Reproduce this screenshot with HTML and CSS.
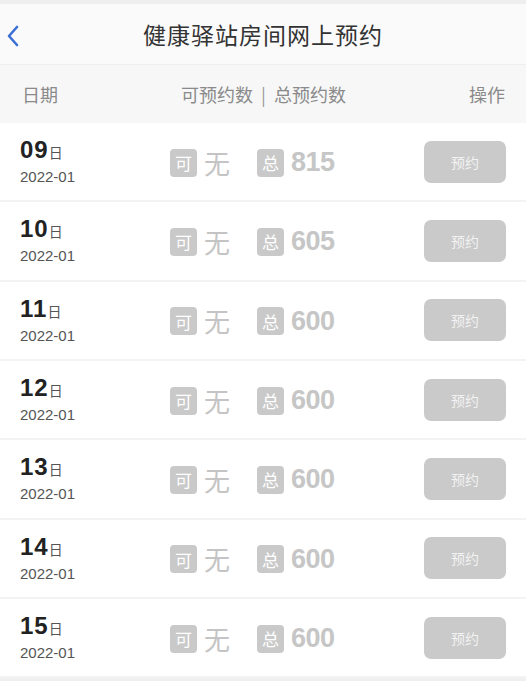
FILE: index.html
```html
<!DOCTYPE html>
<html lang="zh">
<head>
<meta charset="utf-8">
<link rel="stylesheet" href="styles.css">
</head>
<body>
<div class="page">
  <div class="topstrip"></div>
  <header class="navbar">
    <span class="back">
      <svg width="14" height="22" viewBox="0 0 14 22"><path d="M11 2 L3 11 L11 20" fill="none" stroke="#3b6fd6" stroke-width="2.6" stroke-linecap="round" stroke-linejoin="round"/></svg>
    </span>
    <h1 class="title">健康驿站房间网上预约</h1>
  </header>
  <div class="thead">
    <span>日期</span>
    <span>可预约数<span class="sep">|</span>总预约数</span>
    <span>操作</span>
  </div>
  <div class="list">
    <div class="row"><div class="date"><div class="day">09<span class="ri">日</span></div><div class="ym">2022-01</div></div><div class="avail"><span class="badge">可</span><span class="none">无</span></div><div class="total"><span class="badge">总</span><span class="num">815</span></div><button class="btn">预约</button></div>
    <div class="row"><div class="date"><div class="day">10<span class="ri">日</span></div><div class="ym">2022-01</div></div><div class="avail"><span class="badge">可</span><span class="none">无</span></div><div class="total"><span class="badge">总</span><span class="num">605</span></div><button class="btn">预约</button></div>
    <div class="row"><div class="date"><div class="day">11<span class="ri">日</span></div><div class="ym">2022-01</div></div><div class="avail"><span class="badge">可</span><span class="none">无</span></div><div class="total"><span class="badge">总</span><span class="num">600</span></div><button class="btn">预约</button></div>
    <div class="row"><div class="date"><div class="day">12<span class="ri">日</span></div><div class="ym">2022-01</div></div><div class="avail"><span class="badge">可</span><span class="none">无</span></div><div class="total"><span class="badge">总</span><span class="num">600</span></div><button class="btn">预约</button></div>
    <div class="row"><div class="date"><div class="day">13<span class="ri">日</span></div><div class="ym">2022-01</div></div><div class="avail"><span class="badge">可</span><span class="none">无</span></div><div class="total"><span class="badge">总</span><span class="num">600</span></div><button class="btn">预约</button></div>
    <div class="row"><div class="date"><div class="day">14<span class="ri">日</span></div><div class="ym">2022-01</div></div><div class="avail"><span class="badge">可</span><span class="none">无</span></div><div class="total"><span class="badge">总</span><span class="num">600</span></div><button class="btn">预约</button></div>
    <div class="row"><div class="date"><div class="day">15<span class="ri">日</span></div><div class="ym">2022-01</div></div><div class="avail"><span class="badge">可</span><span class="none">无</span></div><div class="total"><span class="badge">总</span><span class="num">600</span></div><button class="btn">预约</button></div>
  </div>
</div>
</body>
</html>
```
FILE: styles.css
```css
html, body {
  margin: 0;
  padding: 0;
  background: #efefef;
  font-family: "Liberation Sans", "Noto Sans CJK SC", sans-serif;
}
.page {
  width: 526px;
}
.topstrip {
  height: 4px;
  background: #eeeeee;
}
.navbar {
  height: 60px;
  background: #fafafa;
  border-bottom: 1px solid #efefef;
  display: flex;
  align-items: center;
  justify-content: center;
  position: relative;
}
.back {
  position: absolute;
  left: 6px;
  top: 21px;
  display: flex;
}
.title {
  margin: 0;
  font-family: "Noto Sans CJK SC", sans-serif;
  font-weight: 400;
  font-size: 23px;
  color: #333;
  letter-spacing: 1px;
}
.thead {
  height: 58px;
  background: #f7f7f7;
  display: flex;
  align-items: center;
  justify-content: space-between;
  padding: 0 21px 0 22px;
  font-family: "Noto Sans CJK SC", sans-serif;
  font-size: 18px;
  color: #8a8a8a;
}
.sep {
  margin: 0 8px;
  color: #999;
}
.row {
  height: 77.33px;
  border-bottom: 2px solid #f3f3f3;
  background: #fff;
  display: flex;
  align-items: center;
  padding: 0 20px;
}
.date {
  width: 150px;
  display: flex;
  flex-direction: column;
}
.day {
  font-size: 24px;
  font-weight: 700;
  color: #222;
  line-height: 24px;
  letter-spacing: 1px;
}
.ri {
  font-family: "Noto Sans CJK SC", sans-serif;
  font-size: 14px;
  font-weight: 400;
  color: #555;
  margin-left: 0;
}
.ym {
  font-size: 15px;
  color: #555;
  margin-top: 4px;
}
.avail, .total {
  display: flex;
  align-items: center;
  gap: 7px;
  padding-top: 2px;
}
.avail {
  width: 87px;
}
.badge {
  width: 27px;
  height: 28px;
  border-radius: 4px;
  background: #c9c9c9;
  color: #fff;
  font-family: "Noto Sans CJK SC", sans-serif;
  font-size: 17px;
  display: flex;
  align-items: center;
  justify-content: center;
}
.none {
  font-family: "Noto Sans CJK SC", sans-serif;
  font-size: 26px;
  color: #c4c4c4;
  line-height: 30px;
}
.num {
  font-size: 27px;
  font-weight: 700;
  color: #c6c6c6;
  letter-spacing: -0.5px;
}
.btn {
  margin-left: auto;
  width: 82px;
  height: 42px;
  border: none;
  border-radius: 7px;
  background: #cacaca;
  color: #f2f2f2;
  font-family: "Noto Sans CJK SC", sans-serif;
  font-size: 14px;
  padding: 0;
}
```
